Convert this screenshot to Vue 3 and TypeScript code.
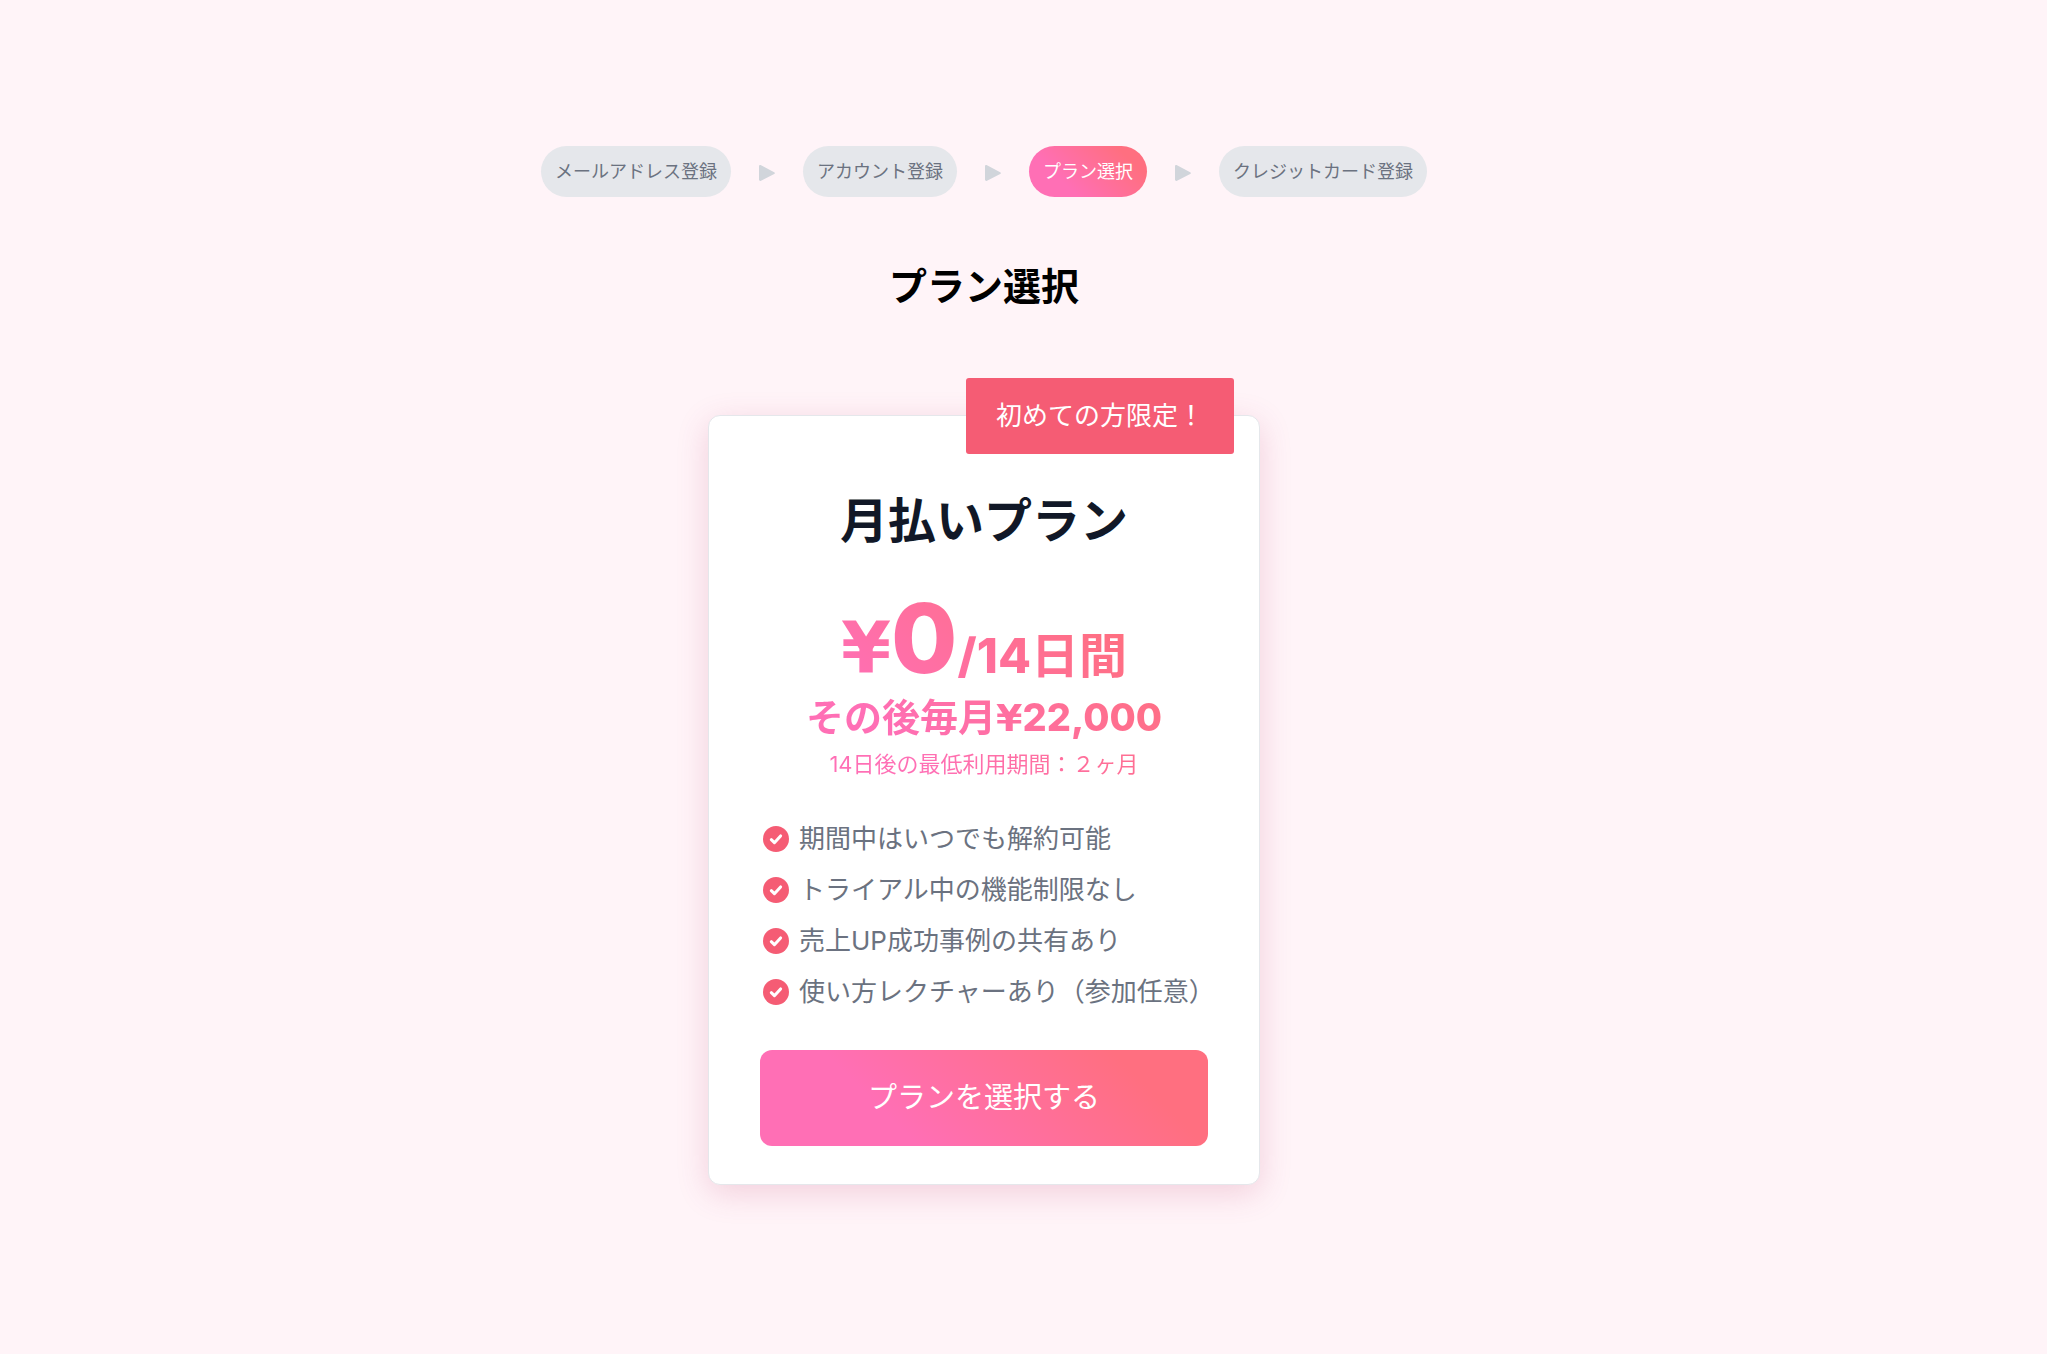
<script setup lang="ts">
interface Step {
  label: string
  current: boolean
}

const steps: Step[] = [
  { label: 'メールアドレス登録', current: false },
  { label: 'アカウント登録', current: false },
  { label: 'プラン選択', current: true },
  { label: 'クレジットカード登録', current: false },
]

const features: string[] = [
  '期間中はいつでも解約可能',
  'トライアル中の機能制限なし',
  '売上UP成功事例の共有あり',
  '使い方レクチャーあり（参加任意）',
]
</script>

<template>
  <main class="page">
    <ol class="steps">
      <li v-for="(step, i) in steps" :key="step.label" class="step">
        <svg v-if="i > 0" class="arrow" viewBox="0 0 16 16" aria-hidden="true">
          <path d="M0 1.4C0 .3 1 -.2 2 .3L15.2 7.2C16.2 7.7 16.2 8.500 15.2 9L2 15.8C1 16.3 0 15.700 0 14.600Z" />
        </svg>
        <span class="pill" :class="{ current: step.current }" :aria-current="step.current ? 'step' : undefined">{{ step.label }}</span>
      </li>
    </ol>

    <h1 class="heading">プラン選択</h1>

    <section class="card">
      <p class="badge">初めての方限定！</p>
      <h2 class="plan">月払いプラン</h2>
      <div class="price">
        <p class="trial"><span class="yen large">¥</span><span class="amount">0</span>/14<span class="kanji">日間</span></p>
        <p class="monthly"><span class="kanji">その後毎月</span><span class="yen">¥</span>22,000</p>
        <p class="term">14日後の最低利用期間：２ヶ月</p>
      </div>
      <ul class="features">
        <li v-for="feature in features" :key="feature" class="feature">
          <svg class="check" viewBox="0 0 26 26" aria-hidden="true">
            <circle cx="13" cy="13" r="13" />
            <path d="M8.300 13.700L11.400 16.700L17.600 9.900" />
          </svg>
          <span>{{ feature }}</span>
        </li>
      </ul>
      <button type="button" class="select">プランを選択する</button>
    </section>
  </main>
</template>

<style>
body {
  background: #fff4f8;
}
</style>

<style scoped>
.page {
  --gradient: linear-gradient(45deg, #ff6fb5 29%, #ff6f80 82%);
  display: flex;
  flex-direction: column;
  align-items: center;
  padding: 146px 79px 120px 0;
  font-family: Inter, "Noto Sans CJK JP", sans-serif;
  color: #6b7280;
}

h1,
h2,
p,
ol,
ul {
  margin: 0;
  padding: 0;
}

ol,
ul {
  list-style: none;
}

.steps,
.step {
  display: flex;
  align-items: center;
}

.arrow {
  width: 16px;
  height: 16px;
  margin: 2px 28px 0;
  fill: #d1d5db;
}

.pill {
  padding: 0 14px;
  border-radius: 26px;
  background: #e5e7eb;
  font-size: 18px;
  line-height: 51px;
  white-space: nowrap;
}

.pill.current {
  background: var(--gradient);
  color: #fff;
}

.heading {
  margin-top: 61px;
  color: #000;
  font-size: 38px;
  line-height: 56px;
  font-weight: 700;
}

.card {
  position: relative;
  box-sizing: border-box;
  width: 552px;
  max-width: 100%;
  margin-top: 101px;
  padding: 73px 51px 38px;
  border: 1px solid #e5e7eb;
  border-radius: 12px;
  background: #fff;
  box-shadow: 0 8px 32px rgba(190, 60, 110, 0.2);
}

.badge {
  position: absolute;
  top: -38px;
  right: 25px;
  padding: 0 30px;
  border-radius: 3px;
  background: #f55c74;
  color: #fff;
  font-size: 26px;
  line-height: 76px;
  white-space: nowrap;
}

.plan {
  color: #111827;
  font-size: 48px;
  line-height: 64px;
  font-weight: 700;
  text-align: center;
}

.price {
  margin-top: 49px;
  background: var(--gradient);
  background-clip: text;
  -webkit-background-clip: text;
  color: transparent;
  text-align: center;
  white-space: nowrap;
}

.trial {
  font-size: 48px;
  line-height: 72px;
  font-weight: 800;
}

.yen {
  font-family: "DejaVu Sans", sans-serif;
  font-weight: 700;
  line-height: 1;
}

.yen.large {
  font-size: 72px;
}

.amount {
  font-size: 96px;
}

.kanji {
  font-weight: 700;
}

.monthly {
  font-size: 38px;
  line-height: 50px;
  font-weight: 800;
}

.term {
  font-size: 22px;
  line-height: 44px;
}

.features {
  margin-top: 27px;
}

.feature {
  display: flex;
  align-items: center;
  gap: 10px;
  padding-left: 3px;
  font-size: 26px;
  line-height: 51px;
  white-space: nowrap;
}

.check {
  flex: none;
  width: 26px;
  height: 26px;
}

.check circle {
  fill: #f55c74;
}

.check path {
  fill: none;
  stroke: #fff;
  stroke-width: 3;
  stroke-linecap: round;
  stroke-linejoin: round;
}

.select {
  display: block;
  width: 100%;
  margin-top: 33px;
  padding: 0;
  border: 0;
  border-radius: 12px;
  background: var(--gradient);
  color: #fff;
  font-family: inherit;
  font-size: 29px;
  line-height: 96px;
  cursor: pointer;
}
</style>
